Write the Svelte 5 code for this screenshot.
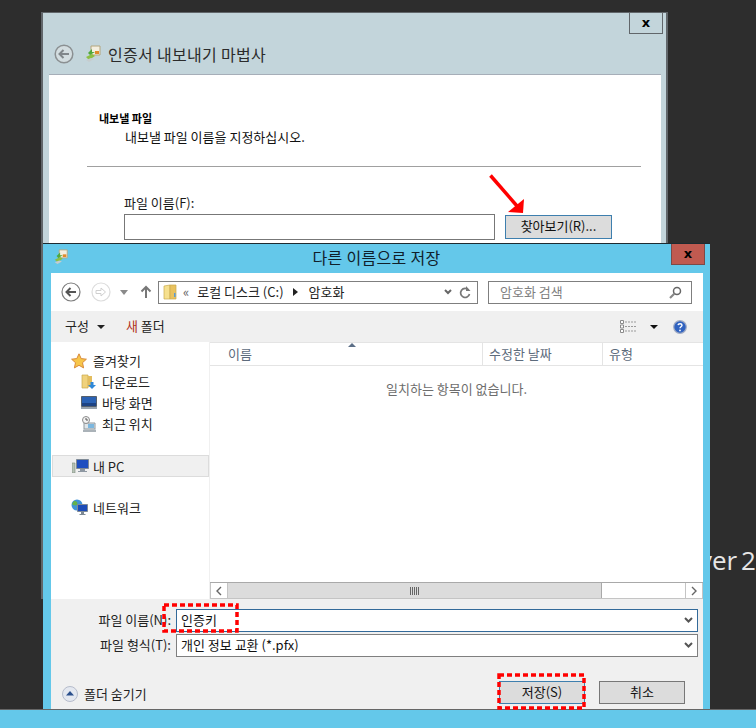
<script>
  const favorites = [
    { label: '다운로드', icon: 'download' },
    { label: '바탕 화면', icon: 'desktop' },
    { label: '최근 위치', icon: 'recent' }
  ];
</script>

<div class="desktop">
  <div class="brand">ver 2</div>

  <section class="wizard">
    <div class="wizard-top">
      <button class="close-plain">x</button>
    </div>
    <div class="wizard-head">
      <svg class="back" width="20" height="20" viewBox="0 0 20 20">
        <circle cx="10" cy="10" r="8.8" fill="#d3dde0" stroke="#8b9092" stroke-width="1.5" />
        <path d="M15 10H6M9.5 6 5.5 10l4 4" fill="none" stroke="#80868a" stroke-width="2" />
      </svg>
      <svg class="cert" width="16" height="18" viewBox="0 0 16 18">
        <path d="M6 1h9v9H6z" fill="#f4efe0" stroke="#b3a67e" />
        <path d="M10 6h4v3h-4z" fill="#e08a2c" />
        <path d="M1 12l6-3 3 2-6 4z" fill="#8cbf44" />
        <path d="M1 15l5-2 3 1-5 3z" fill="#c6ccce" />
        <path d="M3 8l4-4v3l3 0-5 3z" fill="#4fa83c" />
      </svg>
      <span class="wizard-title">인증서 내보내기 마법사</span>
    </div>
    <div class="wizard-body">
      <div class="section-title">내보낼 파일</div>
      <div class="section-desc">내보낼 파일 이름을 지정하십시오.</div>
      <hr />
      <div class="file-label">파일 이름(F):</div>
      <div class="file-row">
        <div class="file-input"></div>
        <button class="btn browse">찾아보기(R)...</button>
      </div>
    </div>
  </section>

  <section class="dialog">
    <div class="dialog-head">
      <svg class="cert-small" width="16" height="16" viewBox="0 0 16 18">
        <path d="M6 1h9v9H6z" fill="#f4efe0" stroke="#b3a67e" />
        <path d="M10 6h4v3h-4z" fill="#e08a2c" />
        <path d="M1 12l6-3 3 2-6 4z" fill="#8cbf44" />
        <path d="M1 15l5-2 3 1-5 3z" fill="#c6ccce" />
        <path d="M3 8l4-4v3l3 0-5 3z" fill="#4fa83c" />
      </svg>
      <span class="dialog-title">다른 이름으로 저장</span>
      <button class="close-red">x</button>
    </div>

    <div class="client">
      <div class="nav">
        <svg width="20" height="20" viewBox="0 0 20 20">
          <circle cx="10" cy="10" r="9" fill="#fff" stroke="#7d7d7d" stroke-width="1.2" />
          <path d="M15 10H6M9.5 6 5.5 10l4 4" fill="none" stroke="#555" stroke-width="2" />
        </svg>
        <svg class="fwd" width="20" height="20" viewBox="0 0 20 20">
          <circle cx="10" cy="10" r="9" fill="#fff" stroke="#dcdcdc" stroke-width="1.2" />
          <path d="M5 8.5h5V6l4.5 4-4.500 4v-2.500H5z" fill="#fff" stroke="#cfcfcf" />
        </svg>
        <svg class="drop" width="8" height="5" viewBox="0 0 8 5"><path d="M0 0h8L4 5z" fill="#8a8a8a" /></svg>
        <svg class="up" width="12" height="14" viewBox="0 0 12 14">
          <path d="M6 13V2M1.5 6.5 6 2l4.500 4.500" fill="none" stroke="#777" stroke-width="2" />
        </svg>
        <div class="address">
          <svg class="folder" width="14" height="16" viewBox="0 0 14 16">
            <path d="M1 2 7 1v14H1z" fill="#f6e08e" stroke="#c9a94e" stroke-width=".7" />
            <path d="M7 1h6v14H7z" fill="#e9c25f" stroke="#c9a94e" stroke-width=".7" />
            <path d="M11 9h1.500v4H11z" fill="#5a9bd6" />
          </svg>
          <span class="chev">«</span>
          <span class="crumb">로컬 디스크 (C:)</span>
          <svg class="crumb-arrow" width="5" height="8" viewBox="0 0 5 8"><path d="M0 0l5 4-5 4z" fill="#222" /></svg>
          <span class="crumb-last">암호화</span>
          <span class="grow"></span>
          <svg width="8" height="6" viewBox="0 0 8 6"><path d="M1 1l3 3 3-3" fill="none" stroke="#666" stroke-width="2" /></svg>
          <svg class="refresh" width="12" height="13" viewBox="0 0 12 13">
            <path d="M9.500 4A4.500 4.500 0 1 0 10.500 8" fill="none" stroke="#777" stroke-width="1.700" />
            <path d="M7 0v5h4.500z" fill="#777" />
          </svg>
        </div>
        <div class="search">
          <span class="search-text">암호화 검색</span>
          <svg width="13" height="13" viewBox="0 0 13 13">
            <circle cx="8" cy="5" r="3.500" fill="none" stroke="#666" stroke-width="1.500" />
            <path d="M5.500 7.500 1 12" stroke="#888" stroke-width="2.200" />
          </svg>
        </div>
      </div>

      <div class="toolbar">
        <span class="tool">구성</span>
        <svg class="tool-drop" width="8" height="4" viewBox="0 0 8 4"><path d="M0 0h8L4 4z" fill="#222" /></svg>
        <span class="tool new-folder"><span class="accent">새</span> 폴더</span>
        <span class="grow"></span>
        <svg width="16" height="13" viewBox="0 0 16 13">
          <path d="M.5.500h3v3h-3zM.5 5h3v3h-3zM.5 9.500h3v3h-3z" fill="#fff" stroke="#8a8a8a" />
          <path d="M5 2h11M5 6.500h11M5 11h11" stroke="#9a9a9a" stroke-dasharray="2 1" />
        </svg>
        <svg class="view-drop" width="8" height="4" viewBox="0 0 8 4"><path d="M0 0h8L4 4z" fill="#111" /></svg>
        <svg class="help" width="14" height="14" viewBox="0 0 14 14">
          <circle cx="7" cy="7" r="6.300" fill="#2f62c0" stroke="#a3adc4" stroke-width="1.200" />
          <path d="M5 5.200c.3-2 4-2 4 0 0 1.500-2 1.500-2 3" fill="none" stroke="#fff" stroke-width="1.400" />
          <circle cx="7" cy="10.400" r=".9" fill="#fff" />
        </svg>
      </div>

      <div class="browser">
        <aside class="tree">
          <div class="tree-row top">
            <svg width="16" height="16" viewBox="0 0 16 16">
              <path d="m8 .8 2.200 4.800 5.200.6-3.900 3.500 1.100 5.200L8 12.300l-4.600 2.600 1.100-5.200L.6 6.200l5.200-.6z" fill="#f7c64a" stroke="#d98a3a" />
            </svg>
            <span>즐겨찾기</span>
          </div>
          {#each favorites as f}
            <div class="tree-row child">
              {#if f.icon === 'download'}
                <svg width="16" height="16" viewBox="0 0 16 16">
                  <path d="M1 1h6v13H1z" fill="#f0d27c" stroke="#c9a94e" stroke-width=".7" />
                  <path d="M7 2h4v11H7z" fill="#e3bd5e" />
                  <path d="M9.500 8h3v3H15l-4 4-4-4h2.500z" fill="#2f88d8" />
                </svg>
              {:else if f.icon === 'desktop'}
                <svg width="16" height="13" viewBox="0 0 16 13">
                  <path d="M.5.500h15v10H.5z" fill="#2b62b4" stroke="#56606c" />
                  <path d="M1 7h14v3H1z" fill="#1d4384" />
                  <path d="M0 11h16v2H0z" fill="#9aa4ae" />
                </svg>
              {:else}
                <svg width="16" height="16" viewBox="0 0 16 16">
                  <path d="M3 7h11v6H3z" fill="#dfe5e8" stroke="#8f989e" />
                  <circle cx="5" cy="4" r="3.500" fill="#f3f3f3" stroke="#8a8a8a" />
                  <path d="M5 2v2h2" fill="none" stroke="#555" />
                  <path d="M7 8h6v4H7z" fill="#7cb7df" />
                  <path d="M2 13.500h13V16H2z" fill="#aab2b8" />
                </svg>
              {/if}
              <span>{f.label}</span>
            </div>
          {/each}
          <div class="tree-row pc">
            <svg width="18" height="14" viewBox="0 0 18 14">
              <path d="M0 4h3v10H0z" fill="#b7c3b7" stroke="#7e8a7e" stroke-width=".6" />
              <path d="M4.500.500h12v9h-12z" fill="#1f4fc0" stroke="#7f8a96" />
              <path d="M8 10h5v2H8zM6 12h9v1H6z" fill="#8e98a2" />
            </svg>
            <span>내 PC</span>
          </div>
          <div class="tree-row network">
            <svg width="17" height="17" viewBox="0 0 17 17">
              <circle cx="6" cy="6" r="5.500" fill="#3e93d8" />
              <path d="M3 2c3 0 4 2 3 4-2 1-4 0-5-1zM7 8l3 1-2 2z" fill="#63b14a" />
              <path d="M6.500 5.500h10v7h-10z" fill="#1b4bb8" stroke="#7f8a96" />
              <path d="M10 13h3v2h-3zM8.500 15h6v1h-6z" fill="#7c8894" />
            </svg>
            <span>네트워크</span>
          </div>
        </aside>
        <div class="list">
          <svg class="sort" width="8" height="4" viewBox="0 0 8 4"><path d="M4 0l4 4H0z" fill="#5c6f87" /></svg>
          <div class="columns">
            <span class="col name">이름</span>
            <span class="col date">수정한 날짜</span>
            <span class="col type">유형</span>
          </div>
          <div class="empty">일치하는 항목이 없습니다.</div>
          <div class="hscroll">
            <span class="arrow"><svg width="6" height="10" viewBox="0 0 6 10"><path d="M5 1 1 5l4 4" fill="none" stroke="#666" stroke-width="1.400" /></svg></span>
            <span class="thumb">
              <svg width="9" height="8" viewBox="0 0 9 8"><path d="M.5 0v8M2.500 0v8M4.500 0v8M6.500 0v8M8.500 0v8" stroke="#666" /></svg>
            </span>
            <span class="track"></span>
            <span class="arrow"><svg width="6" height="10" viewBox="0 0 6 10"><path d="M1 1l4 4-4 4" fill="none" stroke="#666" stroke-width="1.400" /></svg></span>
          </div>
        </div>
      </div>

      <div class="form">
        <div class="form-row first">
          <label class="form-label" for="fname">파일 이름(N):</label>
          <div class="combo active" id="fname">
            <span class="combo-text">인증키</span>
            <svg width="9" height="7" viewBox="0 0 9 7"><path d="M1 1l3.500 3.500L8 1" fill="none" stroke="#555" stroke-width="2" /></svg>
          </div>
        </div>
        <div class="form-row">
          <label class="form-label" for="ftype">파일 형식(T):</label>
          <div class="combo" id="ftype">
            <span class="combo-text">개인 정보 교환 (*.pfx)</span>
            <svg width="9" height="7" viewBox="0 0 9 7"><path d="M1 1l3.500 3.500L8 1" fill="none" stroke="#555" stroke-width="2" /></svg>
          </div>
        </div>
        <div class="actions">
          <svg class="hide-icon" width="16" height="16" viewBox="0 0 16 16">
            <circle cx="8" cy="8" r="7.500" fill="#e4e8f0" stroke="#b6bccb" />
            <path d="M8 5l4 4.500H4z" fill="#2b4f8c" />
          </svg>
          <span class="hide-label">폴더 숨기기</span>
          <span class="grow"></span>
          <button class="btn save">저장(S)</button>
          <button class="btn cancel">취소</button>
        </div>
      </div>
    </div>
  </section>

  <div class="bottom-band"></div>

  <svg class="arrow-mark" width="40" height="44" viewBox="0 0 40 44">
    <path d="M1.500 1.500 28 32" stroke="#f00" stroke-width="3.500" />
    <path d="M35 25 34 39 19 38z" fill="#f00" />
  </svg>
  <svg class="dash dash-name" width="77" height="30" viewBox="0 0 77 30">
    <rect x="2" y="2" width="73" height="26" fill="none" stroke="#f00" stroke-width="3.500" stroke-dasharray="5 3" />
  </svg>
  <svg class="dash dash-save" width="89" height="37" viewBox="0 0 89 37">
    <rect x="2" y="2" width="85" height="33" fill="none" stroke="#f00" stroke-width="3.500" stroke-dasharray="5 3" />
  </svg>
</div>

<style>
  :global(body) {
    margin: 0;
    background: #2d2d2d;
  }

  .desktop {
    position: relative;
    width: 756px;
    height: 728px;
    overflow: hidden;
    background: #2d2d2d;
    font-family: "Noto Sans CJK KR", "Liberation Sans", sans-serif;
    font-size: 13px;
    color: #1a1a1a;
  }

  .grow { flex: 1; }

  .brand {
    position: absolute;
    left: 699px;
    top: 542px;
    white-space: nowrap;
    word-spacing: -3px;
    font-family: "Open Sans", sans-serif;
    font-size: 26px;
    line-height: 36px;
    color: #e6e6e6;
  }

  .wizard {
    position: absolute;
    left: 41px;
    top: 12px;
    width: 623px;
    height: 585px;
    display: flex;
    flex-direction: column;
    background: #c3d5db;
    border: 1px solid #61666a;
    border-width: 1px 2px 1px 2px;
  }

  .wizard-top {
    height: 21px;
    display: flex;
    justify-content: flex-end;
    padding-right: 3px;
  }

  .close-plain, .close-red {
    padding: 0;
    font-family: "DejaVu Sans", sans-serif;
    font-weight: 700;
    font-size: 13px;
    line-height: 14px;
    color: #000;
  }

  .close-plain {
    width: 34px;
    height: 21px;
    background: #c3d5db;
    border: 1px solid #61666a;
    border-top: 0;
  }

  .wizard-head {
    height: 40px;
    display: flex;
    align-items: center;
    border-bottom: 1px solid #a6aeb8;
    margin: 0 5px 0 6px;
    padding-left: 5px;
  }

  .cert { margin-left: 11px; }

  .wizard-title {
    margin-left: 7px;
    font-size: 16px;
    letter-spacing: .3px;
    color: #2b2b2b;
  }

  .wizard-body {
    flex: 1;
    margin: 0 5px 0 6px;
    padding: 36px 20px 0 38px;
    background: #fff;
  }

  .section-title {
    margin-left: 12px;
    font-size: 11px;
    font-weight: 700;
    line-height: 14px;
    color: #000;
  }

  .section-desc {
    margin: 4px 0 0 38px;
    line-height: 16px;
    color: #111;
  }

  hr {
    margin: 21px 0 0 0;
    border: 0;
    border-top: 1px solid #a0a0a0;
  }

  .file-label {
    margin: 28px 0 0 37px;
    line-height: 16px;
  }

  .file-row {
    display: flex;
    align-items: center;
    margin: 3px 0 0 37px;
  }

  .file-input {
    width: 371px;
    height: 26px;
    box-sizing: border-box;
    border: 1px solid #777;
    background: #fff;
  }

  .btn {
    padding: 0 0 3px;
    background: #dcdcdc;
    border: 1px solid #777;
    font: inherit;
    font-size: 13px;
    color: #111;
  }

  .browse {
    width: 107px;
    height: 24px;
    margin-left: 10px;
    border-color: #3e7fae;
  }

  .dialog {
    position: absolute;
    left: 43px;
    top: 243px;
    width: 667px;
    height: 467px;
    display: flex;
    flex-direction: column;
    background: #64c8ea;
    border-top: 1px solid #1e2a30;
    box-sizing: border-box;
  }

  .dialog-head {
    position: relative;
    height: 29px;
    display: flex;
    align-items: center;
    justify-content: center;
  }

  .cert-small {
    position: absolute;
    left: 10px;
    top: 5px;
  }

  .dialog-title {
    padding-bottom: 3px;
    font-size: 16px;
    letter-spacing: .3px;
    color: #10202a;
  }

  .close-red {
    position: absolute;
    right: 5px;
    top: 0;
    width: 34px;
    height: 21px;
    background: #c05a50;
    border: 1px solid #7c4a48;
    border-top: 0;
  }

  .client {
    flex: 1;
    min-height: 0;
    display: flex;
    flex-direction: column;
    margin: 0 7px 0 8px;
    background: #fff;
  }

  .nav {
    height: 38px;
    display: flex;
    align-items: center;
    padding: 0 0 0 10px;
    box-sizing: border-box;
  }

  .fwd { margin-left: 10px; }
  .drop { margin-left: 9px; }
  .up { margin-left: 12px; }

  .address, .search {
    flex: none;
    height: 23px;
    box-sizing: border-box;
    display: flex;
    align-items: center;
    background: #fff;
    border: 1px solid #7f7f7f;
  }

  .address {
    width: 320px;
    margin-left: 6px;
    padding: 0 6px 0 4px;
    color: #222;
  }

  .chev {
    margin-left: 6px;
    padding-bottom: 2px;
    font-size: 13px;
    color: #666;
  }

  .crumb { margin-left: 8px; padding-bottom: 2px; }
  .crumb-arrow { margin-left: 9px; }
  .crumb-last { margin-left: 11px; padding-bottom: 2px; }
  .refresh { margin-left: 7px; }

  .search {
    width: 204px;
    margin-left: 10px;
    padding: 0 9px 0 11px;
    justify-content: space-between;
    color: #7f7f7f;
  }

  .search-text { padding-bottom: 2px; }

  .toolbar {
    height: 31px;
    display: flex;
    align-items: center;
    padding: 0 16px 0 14px;
    background: #f0f0f0;
  }

  .tool { padding-bottom: 3px; color: #222; }
  .tool-drop { margin-left: 8px; }
  .new-folder { margin-left: 21px; }
  .accent { color: #b03020; }
  .view-drop { margin-left: 14px; }
  .help { margin-left: 15px; }

  .browser {
    flex: 1;
    min-height: 0;
    display: flex;
  }

  .tree {
    width: 158px;
    padding-top: 8px;
    border-right: 1px solid #f0f0f0;
    color: #222;
  }

  .tree-row {
    display: flex;
    align-items: center;
    gap: 5px;
    height: 21px;
  }

  .top { padding-left: 20px; gap: 6px; }
  .child { padding-left: 30px; }

  .pc {
    margin: 21px 0 0 1px;
    height: 20px;
    padding-left: 19px;
    gap: 3px;
    background: #f0f0f0;
    border: 1px solid #dcdcdc;
  }

  .network {
    margin-top: 20px;
    padding-left: 20px;
  }

  .list {
    position: relative;
    flex: 1;
    min-width: 0;
    display: flex;
    flex-direction: column;
  }

  .sort {
    position: absolute;
    left: 138px;
    top: 1px;
  }

  .columns {
    height: 24px;
    display: flex;
    border-top: 1px solid #e4e4e4;
    border-bottom: 1px solid #e4e4e4;
    box-sizing: border-box;
    color: #5d6b7c;
  }

  .col {
    display: flex;
    align-items: center;
    padding: 0 0 2px 6px;
    box-sizing: border-box;
  }

  .name { width: 273px; padding-left: 18px; border-right: 1px solid #e4e4e4; }
  .date { width: 120px; border-right: 1px solid #e4e4e4; }
  .type { flex: 1; }

  .empty {
    flex: 1;
    padding-top: 15px;
    text-align: center;
    line-height: 16px;
    color: #6d6d6d;
  }

  .hscroll {
    height: 17px;
    display: flex;
    box-sizing: border-box;
    border-top: 1px solid #a9a9a9;
    border-bottom: 1px solid #c4c4c4;
  }

  .arrow {
    width: 16px;
    display: flex;
    align-items: center;
    justify-content: center;
    border-left: 1px solid #c4c4c4;
    border-right: 1px solid #c4c4c4;
  }

  .thumb {
    width: 373px;
    display: flex;
    align-items: center;
    justify-content: center;
    background: #dcdcdc;
    border-right: 1px solid #a9a9a9;
  }

  .track { flex: 1; }

  .form {
    height: 111px;
    box-sizing: border-box;
    padding: 10px 5px 0 0;
    display: flex;
    flex-direction: column;
    background: #f0f0f0;
  }

  .form-row {
    display: flex;
    align-items: center;
    margin-bottom: 2px;
  }

  .form-label {
    width: 125px;
    padding: 0 5px 2px 0;
    box-sizing: border-box;
    white-space: nowrap;
    text-align: right;
    color: #222;
  }

  .combo {
    flex: 1;
    height: 23px;
    box-sizing: border-box;
    display: flex;
    align-items: center;
    justify-content: space-between;
    padding: 0 4px;
    background: #fff;
    border: 1px solid #7f7f7f;
    color: #111;
  }

  .combo-text { padding-bottom: 2px; }
  .combo.active { border-color: #336a9a; }

  .actions {
    flex: 1;
    display: flex;
    align-items: center;
    padding: 16px 13px 0 11px;
  }

  .hide-icon { margin-top: 3px; }

  .hide-label {
    margin-left: 6px;
    padding-top: 1px;
    color: #222;
  }

  .save, .cancel {
    width: 86px;
    height: 23px;
  }

  .save { border-color: #3e7fae; }
  .cancel { margin-left: 14px; }

  .bottom-band {
    position: absolute;
    left: 0;
    top: 709px;
    width: 756px;
    height: 19px;
    background: #64c8ea;
    border-top: 1px solid #666;
    box-sizing: border-box;
  }

  .arrow-mark {
    position: absolute;
    left: 489px;
    top: 174px;
  }

  .dash { position: absolute; }

  .dash-name {
    left: 162px;
    top: 603px;
  }

  .dash-save {
    left: 497px;
    top: 673px;
  }
</style>
